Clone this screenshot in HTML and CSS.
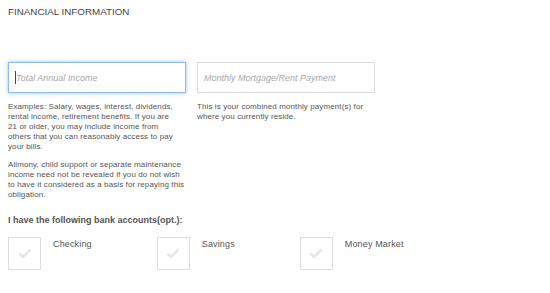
FILE: index.html
```html
<!DOCTYPE html>
<html lang="en">
<head>
  <meta charset="UTF-8">
  <title>Financial Information</title>
  <link rel="stylesheet" href="styles.css">
</head>
<body>
  <h2 class="section-title">Financial Information</h2>

  <div class="fields">
    <div class="field">
      <div class="input-wrap">
        <input class="text-input focused" type="text" placeholder="Total Annual Income">
        <span class="caret"></span>
      </div>
      <p class="help">Examples: Salary, wages, interest, dividends,<br>rental income, retirement benefits. If you are<br>21 or older, you may include income from<br>others that you can reasonably access to pay<br>your bills.</p>
      <p class="help">Alimony, child support or separate maintenance<br>income need not be revealed if you do not wish<br>to have it considered as a basis for repaying this<br>obligation.</p>
    </div>
    <div class="field">
      <div class="input-wrap">
        <input class="text-input" type="text" placeholder="Monthly Mortgage/Rent Payment">
      </div>
      <p class="help">This is your combined monthly payment(s) for<br>where you currently reside.</p>
    </div>
  </div>

  <h3 class="accounts-title">I have the following bank accounts(opt.):</h3>

  <div class="accounts">
    <label class="account">
      <span class="checkbox">
        <svg width="14" height="11" viewBox="0 0 14 11"><path d="M1.5 5.5 L5 9 L12.5 1.5" fill="none" stroke="#e6e6e6" stroke-width="2.6"/></svg>
      </span>
      <span class="account-name">Checking</span>
    </label>
    <label class="account">
      <span class="checkbox">
        <svg width="14" height="11" viewBox="0 0 14 11"><path d="M1.5 5.5 L5 9 L12.5 1.5" fill="none" stroke="#e6e6e6" stroke-width="2.6"/></svg>
      </span>
      <span class="account-name">Savings</span>
    </label>
    <label class="account">
      <span class="checkbox">
        <svg width="14" height="11" viewBox="0 0 14 11"><path d="M1.5 5.5 L5 9 L12.5 1.5" fill="none" stroke="#e6e6e6" stroke-width="2.6"/></svg>
      </span>
      <span class="account-name">Money Market</span>
    </label>
  </div>
</body>
</html>
```

FILE: styles.css
```css
body {
  margin: 0;
  padding: 0 8px;
  font-family: "Liberation Sans", Arial, sans-serif;
  color: #555;
  background: #fff;
}

.section-title {
  margin: 0;
  padding-top: 6px;
  font-size: 9.8px;
  line-height: 12px;
  font-weight: normal;
  text-transform: uppercase;
  color: #444;
}

.fields {
  display: flex;
  gap: 11px;
  margin-top: 44px;
}

.field {
  width: 178px;
}

.input-wrap {
  position: relative;
}

.text-input {
  display: block;
  box-sizing: border-box;
  width: 178px;
  height: 31px;
  margin: 0;
  padding: 0 6px;
  border: 1px solid #dcdcdc;
  border-radius: 0;
  font-family: "Liberation Sans", Arial, sans-serif;
  font-size: 9px;
  color: #555;
  outline: none;
}

.text-input::placeholder {
  color: #a8a8a8;
  font-style: italic;
}

.text-input.focused {
  padding-left: 7px;
  border-color: #8fbbe8;
  box-shadow: 0 0 4px rgba(110, 165, 230, 0.7);
}

.caret {
  position: absolute;
  left: 7px;
  top: 9px;
  width: 1px;
  height: 13px;
  background: #444;
}

.help {
  margin: 8px 0 0;
  font-size: 8px;
  line-height: 10px;
  letter-spacing: 0.1px;
  white-space: nowrap;
  color: #555;
}

.field .input-wrap + .help {
  margin-top: 9px;
}

.accounts-title {
  margin: 14px 0 0;
  font-size: 9px;
  line-height: 12px;
  font-weight: bold;
  color: #555;
}

.accounts {
  display: flex;
  gap: 65px;
  margin-top: 11px;
}

.account {
  display: flex;
  align-items: flex-start;
  gap: 12px;
}

.checkbox {
  display: flex;
  align-items: center;
  justify-content: center;
  box-sizing: border-box;
  width: 33px;
  height: 33px;
  border: 1px solid #dedede;
}

.account-name {
  padding-top: 1px;
  font-size: 9px;
  line-height: 12px;
  letter-spacing: 0.15px;
  color: #555;
}
```
